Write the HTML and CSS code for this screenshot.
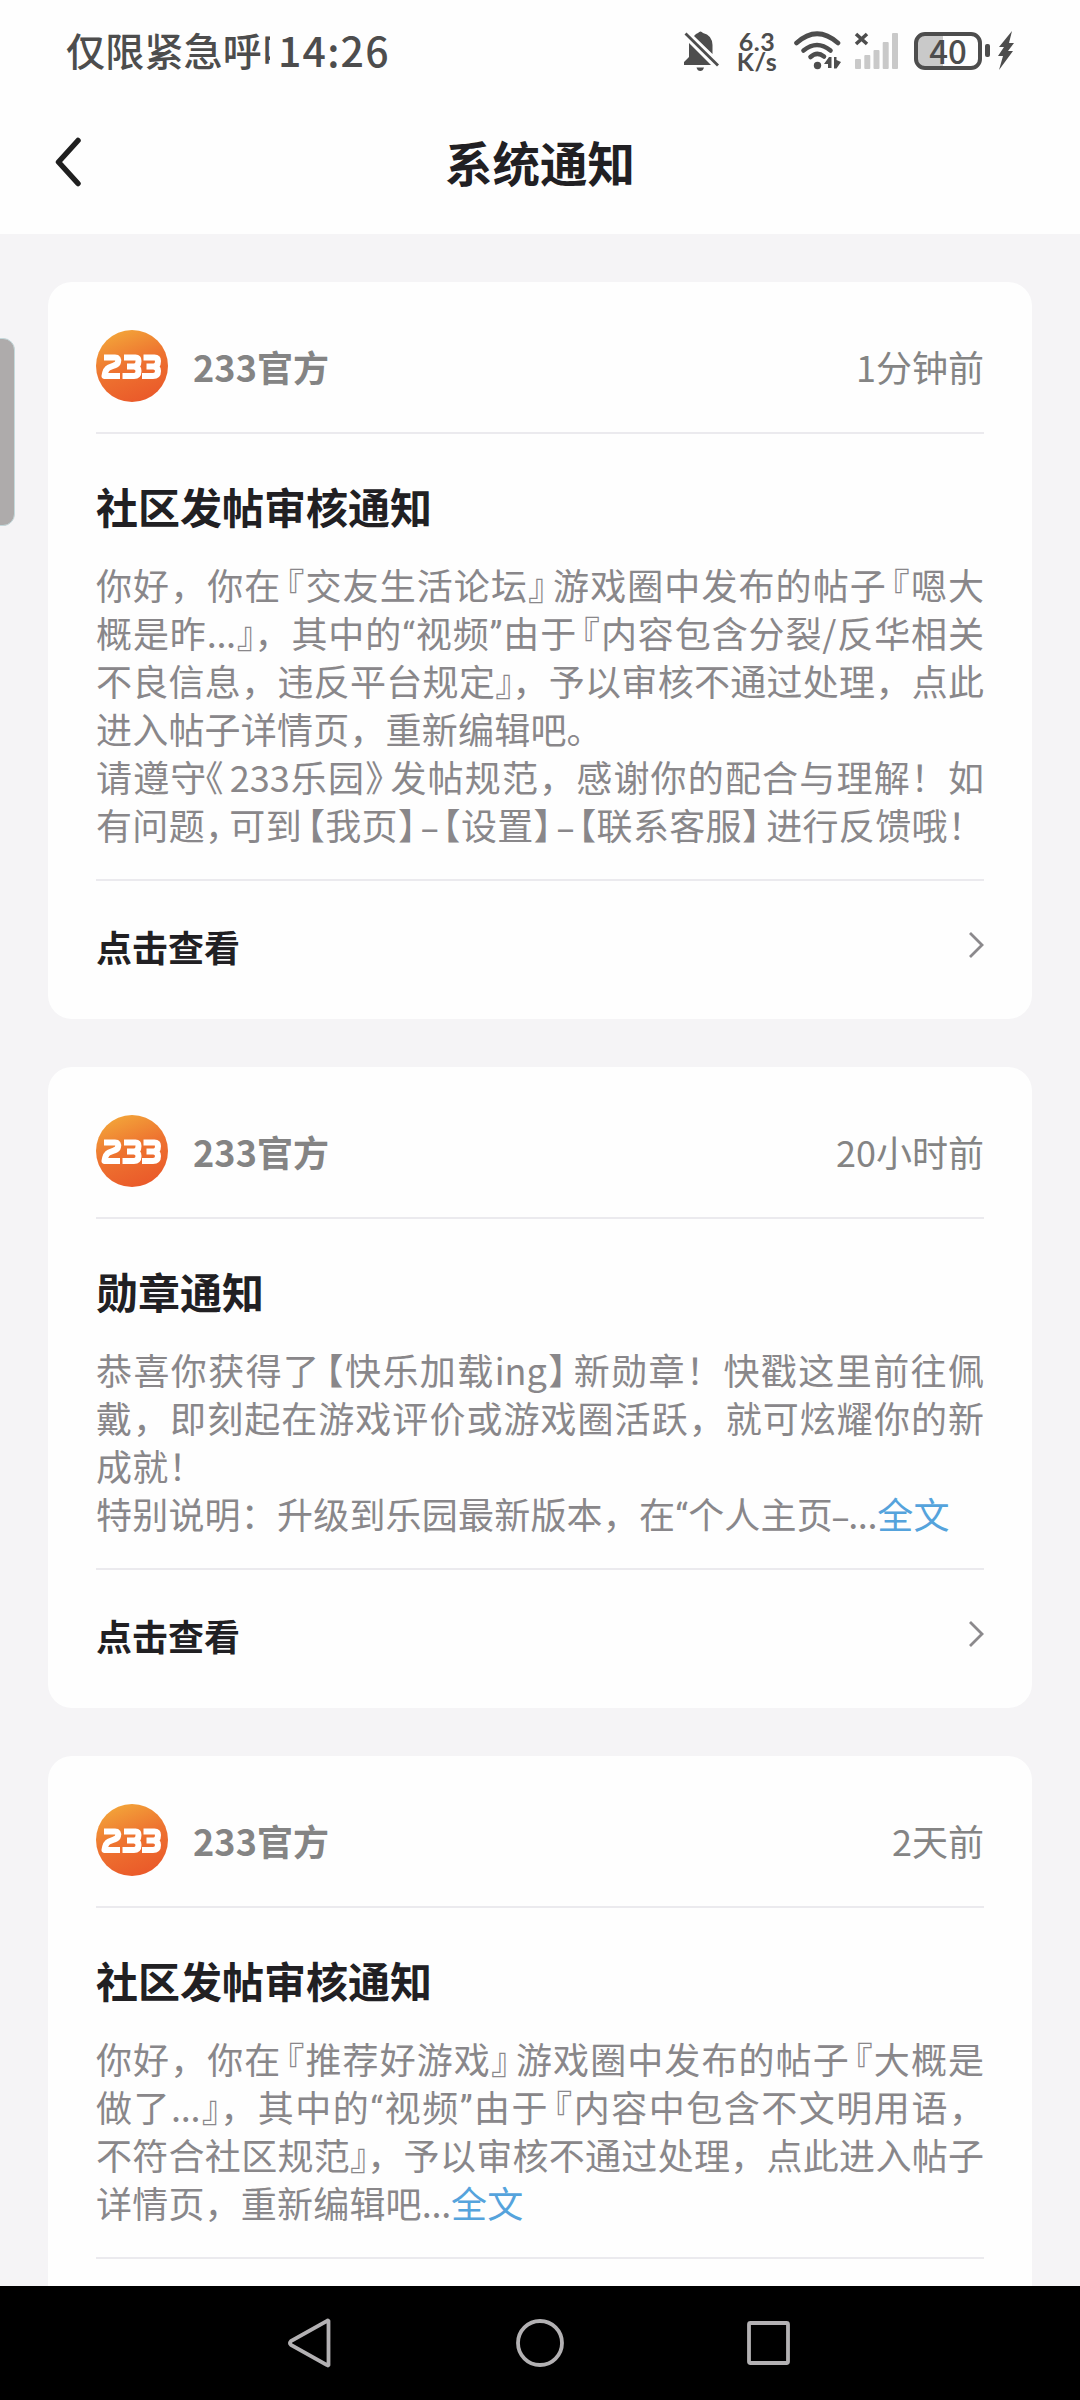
FILE: index.html
```
<!DOCTYPE html>
<html lang="zh-CN">
<head>
<meta charset="utf-8">
<title>系统通知</title>
<link rel="stylesheet" href="styles.css">
</head>
<body>
<svg class="defs" width="0" height="0" aria-hidden="true">
  <defs>
    <linearGradient id="orange" x1="0.2" y1="0" x2="0.6" y2="1">
      <stop offset="0" stop-color="#f3a83a"/>
      <stop offset="0.5" stop-color="#ee7430"/>
      <stop offset="1" stop-color="#ea5a2a"/>
    </linearGradient>
    <symbol id="avatar" viewBox="0 0 72 72">
      <circle cx="36" cy="36" r="36" fill="url(#orange)"/>
      <g fill="none" stroke="#fff" stroke-width="6" stroke-linejoin="round">
        <path d="M8 27.500H19Q23 27.500 22 32Q21.500 34.500 18 35.500L13 37.500Q9.500 39 8.500 46H24"/>
        <path d="M28 27.500H39.500Q42.500 27.500 42.500 31Q42.500 36.500 38 36.500H31M38 36.500Q42.500 37 42.500 41Q42.500 46 38 46H26.500"/>
        <path d="M47.500 27.500H58.500Q62 27.500 62 31Q62 36.500 57.500 36.500H50.500M57.500 36.500Q62 37 62 41Q62 46 57 46H46"/>
      </g>
    </symbol>
    <symbol id="chevron" viewBox="0 0 16 28">
      <path d="M2 2L14 14L2 26" fill="none" stroke="#8b898c" stroke-width="2.800"/>
    </symbol>
  </defs>
</svg>
<div class="screen">
  <header class="status">
    <span class="carrier">仅限紧急呼叫</span>
    <span class="clock">14:26</span>
    <div class="status-icons">
      <svg class="bell" width="36" height="42" viewBox="0 0 36 42" fill="#4d4d4d">
        <path d="M5 13V27L0 32V35H27Z"/>
        <path d="M10 6Q12 3.500 14 3Q16.500 0 19 3Q28 5 28.500 15V24Z"/>
        <path d="M12.500 37.500H20Q19 41 16.300 41Q13.500 41 12.500 37.500Z"/>
        <path d="M1.500 3.500L34 35.500" stroke="#4d4d4d" stroke-width="2.800"/>
      </svg>
      <div class="speed"><span>6.3</span><span>K/s</span></div>
      <svg class="wifi" width="48" height="40" viewBox="0 0 48 40">
        <g fill="none" stroke="#4d4d4d" stroke-width="4.600" stroke-linecap="round">
          <path d="M2.500 12Q23 -6.500 44 12"/>
          <path d="M9.500 19.500Q23 8.500 36.500 19.500"/>
          <path d="M16.500 26Q23 20 30 25.500"/>
        </g>
        <circle cx="23.500" cy="34.500" r="3.700" fill="#4d4d4d"/>
        <path d="M30 33L35 26H37.500V37H34V33ZM40 26H42.500V29L47 31L42.500 37.500H40Z" fill="#4d4d4d"/>
      </svg>
      <svg class="signal" width="45" height="40" viewBox="0 0 45 40">
        <path d="M2 3L13 13M13 3L2 13" stroke="#4d4d4d" stroke-width="3.600"/>
        <g fill="#c9c9c9">
          <rect x="1" y="28" width="6" height="10" rx="1"/>
          <rect x="10.300" y="24" width="6" height="14" rx="1"/>
          <rect x="19.500" y="19" width="6" height="19" rx="1"/>
          <rect x="28.700" y="11" width="6" height="27" rx="1"/>
          <rect x="38" y="2" width="6" height="36" rx="1"/>
        </g>
      </svg>
      <div class="battery"><span>40</span></div>
      <svg class="charge" width="5" height="40" viewBox="0 0 5 40" fill="#4d4d4d">
        <rect x="0" y="13" width="5" height="13" rx="2"/>
      </svg>
      <svg class="bolt" width="16" height="40" viewBox="0 0 16 40" fill="#4d4d4d">
        <path d="M14 0L1 16H6L0 25H5L1 39L15 20H10L16 12H11Z"/>
      </svg>
    </div>
  </header>
  <nav class="topbar">
    <svg class="back" width="28" height="50" viewBox="0 0 28 50"><path d="M24 3.500L4.500 25L24 46.500" fill="none" stroke="#1f1f1f" stroke-width="5.500" stroke-linecap="round" stroke-linejoin="round"/></svg>
    <h1>系统通知</h1>
  </nav>
  <main class="list">
    <article class="card">
      <div class="card-head">
        <svg class="avatar"><use href="#avatar"/></svg>
        <span class="name">233官方</span>
        <time>1分钟前</time>
      </div>
      <h2>社区发帖审核通知</h2>
      <div class="body">
        <p class="full">你好，你在<i class="open">『</i>交友生活论坛<i class="close">』</i>游戏圈中发布的帖子<i class="open">『</i>嗯大</p>
        <p class="full">概是昨<i class="dots">...</i><i class="close tight">』</i>，其中的<i class="quote">“</i>视频<i class="quote">”</i>由于<i class="open">『</i>内容包含分裂/反华相关</p>
        <p class="full">不良信息，违反平台规定<i class="close tight">』</i>，予以审核不通过处理，点此</p>
        <p>进入帖子详情页，重新编辑吧。</p>
        <p class="full">请遵守<i class="open book">《</i>233乐园<i class="close">》</i>发帖规范，感谢你的配合与理解！如</p>
        <p class="full tail">有问题<i class="close">，</i>可到<i class="open">【</i>我页<i class="close">】</i><i class="dash">–</i><i class="open">【</i>设置<i class="close">】</i><i class="dash">–</i><i class="open">【</i>联系客服<i class="close">】</i>进行反馈哦<i class="close">！</i></p>
      </div>
      <div class="card-foot"><span>点击查看</span><svg class="chevron"><use href="#chevron"/></svg></div>
    </article>
    <article class="card">
      <div class="card-head">
        <svg class="avatar"><use href="#avatar"/></svg>
        <span class="name">233官方</span>
        <time>20小时前</time>
      </div>
      <h2>勋章通知</h2>
      <div class="body">
        <p class="full">恭喜你获得了<i class="open">【</i>快乐加载ing<i class="close">】</i>新勋章！快戳这里前往佩</p>
        <p class="full">戴，即刻起在游戏评价或游戏圈活跃，就可炫耀你的新</p>
        <p>成就！</p>
        <p>特别说明：升级到乐园最新版本，在<i class="quote">“</i>个人主页<i class="dash">–</i><i class="dots">...</i><a>全文</a></p>
      </div>
      <div class="card-foot"><span>点击查看</span><svg class="chevron"><use href="#chevron"/></svg></div>
    </article>
    <article class="card">
      <div class="card-head">
        <svg class="avatar"><use href="#avatar"/></svg>
        <span class="name">233官方</span>
        <time>2天前</time>
      </div>
      <h2>社区发帖审核通知</h2>
      <div class="body">
        <p class="full">你好，你在<i class="open">『</i>推荐好游戏<i class="close">』</i>游戏圈中发布的帖子<i class="open">『</i>大概是</p>
        <p class="full comma-end">做了<i class="dots">...</i><i class="close tight">』</i>，其中的<i class="quote">“</i>视频<i class="quote">”</i>由于<i class="open">『</i>内容中包含不文明用语<i class="close">，</i></p>
        <p class="full">不符合社区规范<i class="close tight">』</i>，予以审核不通过处理，点此进入帖子</p>
        <p>详情页，重新编辑吧<i class="dots">...</i><a>全文</a></p>
      </div>
      <div class="card-foot"><span>点击查看</span><svg class="chevron"><use href="#chevron"/></svg></div>
    </article>
  </main>
  <footer class="navbar">
    <svg width="48" height="52" viewBox="0 0 48 52"><path d="M41.500 4V48Q41 49 40 48L4 28Q2 26 4 24L40 4Q41 3 41.500 4Z"/></svg>
    <svg width="52" height="52" viewBox="0 0 52 52"><circle cx="26" cy="26" r="22"/></svg>
    <svg width="48" height="52" viewBox="0 0 48 52"><rect x="4" y="6" width="39" height="40" rx="1.500"/></svg>
  </footer>
  <div class="edge-handle"></div>
</div>
</body>
</html>
```
FILE: styles.css
```
* { box-sizing: border-box; margin: 0; padding: 0; }
body { background: #f5f4f6; font-family: "Noto Sans CJK SC", sans-serif; color: #212023; }
i { font-style: normal; }
svg { flex: none; display: block; }
.defs { position: absolute; }

.screen { position: relative; width: 1080px; height: 2400px; overflow: hidden; display: flex; flex-direction: column; }

.status { height: 102px; flex: none; display: flex; align-items: center; padding-left: 66px; background: #fefefe; color: #4d4d4d; }
.carrier { width: 204px; overflow: hidden; white-space: nowrap; font-size: 39px; font-weight: 500; line-height: 60px; letter-spacing: 0.2px; padding-bottom: 4px; }
.clock { margin-left: 8px; width: 120px; font-size: 41px; font-weight: 500; line-height: 60px; letter-spacing: 1.200px; padding-bottom: 4px; }
.status-icons { display: flex; align-items: center; height: 60px; margin-left: 286px; }
.speed { display: flex; flex-direction: column; align-items: center; width: 40px; margin-left: 17px; font: 700 25px/20px "Lato", sans-serif; letter-spacing: 0.5px; }
.wifi { margin-left: 17px; }
.signal { margin-left: 12px; }
.battery { margin-left: 15px; width: 68px; height: 38px; border: 4px solid #4d4d4d; border-radius: 11px; background: linear-gradient(90deg, #c9c9c9 42%, transparent 42%); display: flex; align-items: center; justify-content: center; font: 500 33px/30px "Noto Sans CJK SC", sans-serif; }
.battery span { margin-top: -3px; }
.charge { margin-left: 3px; }
.bolt { margin-left: 8px; }

.topbar { height: 132px; flex: none; display: grid; grid-template-columns: 100px 1fr 100px; align-items: center; padding-bottom: 13px; background: #fefefe; }
.back { margin-left: 54px; }
.topbar h1 { text-align: center; font-size: 47.500px; line-height: 70px; font-weight: 700; }

.list { flex: 1; min-height: 0; overflow: hidden; padding: 48px 48px 0; display: flex; flex-direction: column; gap: 48px; }
.card { flex: none; padding: 0 48px; background: #fefefe; border-radius: 24px; }
.card-head { display: flex; align-items: center; height: 152px; padding-top: 18px; border-bottom: 2px solid #ebeaee; color: #848484; font-size: 36px; line-height: 52px; }
.avatar { width: 72px; height: 72px; }
.name { margin-left: 25px; font-weight: 700; flex: 1; letter-spacing: 0.1px; }
.card h2 { margin-top: 42px; margin-bottom: 24px; height: 60px; font-size: 42px; line-height: 60px; font-weight: 700; }
.body { padding-bottom: 31px; border-bottom: 2px solid #ebeaee; color: #89878a; font-size: 36px; line-height: 48px; }
.body p { height: 48px; white-space: nowrap; letter-spacing: 0.200px; }
.body .full { white-space: normal; letter-spacing: 0; text-align: justify; text-align-last: justify; }
.body .tail { width: 876px; }
.body .comma-end { width: 877px; }
.open, .close { font-feature-settings: "halt"; }
.open { margin-left: 5px; }
.close { margin-right: 6px; }
.tight { margin-right: -1px; }
.book { margin-left: -2px; margin-right: 5px; }
.quote { font-family: "Roboto", sans-serif; }
.dots { letter-spacing: -0.3px; }
.dash { font-family: "Inter", sans-serif; font-size: 30px; }
.body a { color: #55a3dc; }
.card-foot { height: 138px; display: flex; align-items: center; justify-content: space-between; padding-bottom: 9px; font-size: 36px; line-height: 52px; font-weight: 700; }
.chevron { width: 16px; height: 28px; margin-top: -2px; }

.navbar { height: 114px; flex: none; display: flex; align-items: center; background: #000; padding-left: 287px; }
.navbar svg { fill: none; stroke: #b3b1b3; stroke-width: 3.800px; }
.navbar svg + svg { margin-left: 179px; }

.edge-handle { position: absolute; left: -12px; top: 338px; width: 27px; height: 188px; border-radius: 12px; background: #aeabab; border: 1px solid #c4d9dc; }
```
